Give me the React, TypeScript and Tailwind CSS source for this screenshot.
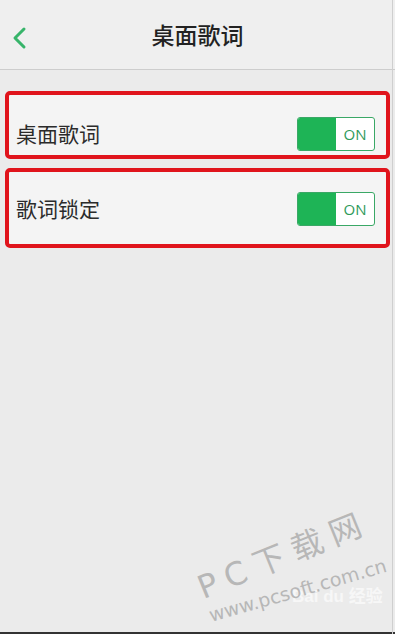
import React from "react";

const font = { fontFamily: '"Noto Sans CJK SC", "Noto Sans", sans-serif' };

function Toggle() {
  return (
    <div className="flex h-[34px] w-[78px] overflow-hidden rounded-[3px] border border-[#3aa866] bg-white">
      <div className="w-[38px] bg-[#1eb456]" />
      <div className="flex flex-1 items-center justify-center text-[15px] font-medium text-[#2e9a5a]" style={{ fontFamily: '"Open Sans", sans-serif' }}>
        ON
      </div>
    </div>
  );
}

function Row({ label, className }: { label: string; className: string }) {
  return (
    <div className={`flex items-center justify-between rounded-[5px] border-4 border-[#e0141c] bg-[#f4f4f4] pl-[7px] pr-[11px] ${className}`}>
      <span className="text-[21px] text-[#2b2b2b]">{label}</span>
      <Toggle />
    </div>
  );
}

export default function App() {
  return (
    <div className="relative flex h-[634px] w-[395px] flex-col overflow-hidden bg-[#ebebeb]" style={font}>
      {/* Header */}
      <div className="relative flex h-[70px] items-center justify-center border-b border-[#cdcdcd] bg-[#efefef]">
        <svg className="absolute left-[10px] top-[26px]" width="18" height="24" viewBox="0 0 18 24">
          <path d="M14 3 L5 12 L14 21" fill="none" stroke="#37b46a" strokeWidth="3" strokeLinecap="round" strokeLinejoin="round" />
        </svg>
        <span className="text-[23px] font-medium text-[#222]">桌面歌词</span>
      </div>

      <div className="ml-[5px] mr-[5px] mt-[21px] flex flex-col gap-[9px]">
        <Row label="桌面歌词" className="h-[68px] pt-[18px]" />
        <Row label="歌词锁定" className="h-[80px] pt-[2px]" />
      </div>

      <div className="flex-1" />
      <div className="h-[2px] bg-[#333]" />

      {/* right frame edge */}
      <div className="absolute right-[2px] top-0 h-full w-px bg-[#cfcfcf]" />

      {/* Watermark */}
      <div className="pointer-events-none absolute left-[292px] top-[588px] whitespace-nowrap text-[17px] font-bold leading-none text-[#f7f7f7]" style={{ fontFamily: '"Liberation Sans", "Noto Sans CJK SC", sans-serif' }}>
        Bai du 经验
      </div>
      <div className="pointer-events-none absolute left-[205px] top-[572px] origin-bottom-left -rotate-[22deg] whitespace-nowrap text-[32px] leading-none tracking-[9px] text-[#b7b7b7]" style={{ fontFamily: '"DejaVu Sans", "Noto Sans CJK SC", sans-serif' }}>
        PC下载网
      </div>
      <div className="pointer-events-none absolute left-[212px] top-[606px] origin-bottom-left -rotate-[16deg] whitespace-nowrap text-[19px] leading-none text-[#b7b7b7]" style={{ fontFamily: '"DejaVu Sans", sans-serif' }}>
        www.pcsoft.com.cn
      </div>
    </div>
  );
}
